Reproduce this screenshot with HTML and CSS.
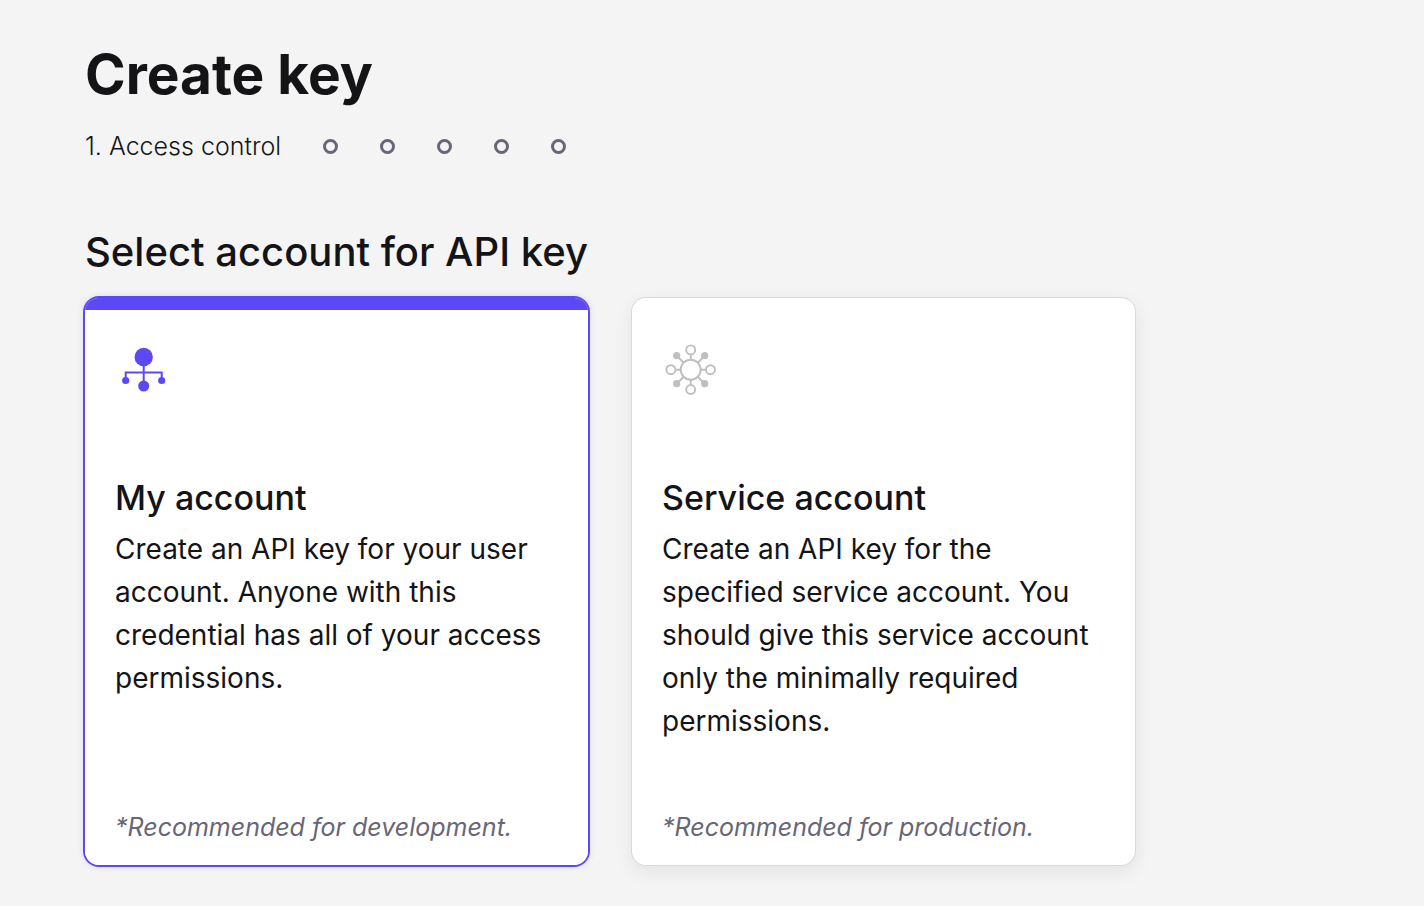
FILE: index.html
```html
<!DOCTYPE html>
<html lang="en">
<head>
<meta charset="utf-8">
<meta name="viewport" content="width=device-width, initial-scale=1">
<title>Create key</title>
<link rel="stylesheet" href="styles.css">
</head>
<body>
<main class="page">
  <h1 class="page-title">Create key</h1>
  <div class="stepper">
    <span class="step-label">1. Access control</span>
    <ol class="step-dots" aria-label="Remaining steps">
      <li class="dot"></li><li class="dot"></li><li class="dot"></li><li class="dot"></li><li class="dot"></li>
    </ol>
  </div>
  <h2 class="section-title" id="account-heading">Select account for API key</h2>
  <div class="cards" role="radiogroup" aria-labelledby="account-heading">
    <label class="card">
      <input class="card-input" type="radio" name="account" value="user" checked>
      <svg class="card-icon" viewBox="0 0 56 56" aria-hidden="true">
        <g fill="currentColor"><circle cx="28.700" cy="16" r="9.200"/><circle cx="28.700" cy="45" r="5.500"/><circle cx="10.700" cy="39.500" r="3.600"/><circle cx="46.700" cy="39.500" r="3.600"/></g>
        <path d="M28.700 16v28M10.700 39v-7.500h36V39" fill="none" stroke="currentColor" stroke-width="2"/>
      </svg>
      <span class="card-title">My account</span>
      <span class="card-text">Create an API key for your user account. Anyone with this credential has all of your access permissions.</span>
      <em class="card-note">*Recommended for development.</em>
    </label>
    <label class="card">
      <input class="card-input" type="radio" name="account" value="service">
      <svg class="card-icon" viewBox="0 0 56 56" aria-hidden="true">
        <g fill="none" stroke="currentColor" stroke-width="1.900"><circle cx="28.700" cy="28.700" r="10"/><circle cx="28.700" cy="8.900" r="4.500"/><circle cx="28.700" cy="48.500" r="4.500"/><circle cx="8.900" cy="28.700" r="4.500"/><circle cx="48.500" cy="28.700" r="4.500"/><path d="M28.700 13.500v5M28.700 39v5M13.500 28.700h5M39 28.700h5M15 15l6.500 6.500M42.500 15l-6.500 6.500M15 42.500l6.500-6.500M42.500 42.500l-6.500-6.500"/></g>
        <g fill="currentColor"><circle cx="14.700" cy="14.700" r="3.600"/><circle cx="42.700" cy="14.700" r="3.600"/><circle cx="14.700" cy="42.700" r="3.600"/><circle cx="42.700" cy="42.700" r="3.600"/></g>
      </svg>
      <span class="card-title">Service account</span>
      <span class="card-text">Create an API key for the specified service account. You should give this service account only the minimally required permissions.</span>
      <em class="card-note">*Recommended for production.</em>
    </label>
  </div>
</main>
</body>
</html>
```
FILE: styles.css
```css
* { box-sizing: border-box; }
body { margin: 0; background: #f4f4f4; color: #141416; font-family: Inter, "Liberation Sans", sans-serif; }
.page { padding: 40px 85px; }
.page-title { margin: 0; font-size: 55px; line-height: 68px; font-weight: 700; }
.stepper { display: flex; align-items: center; gap: 42px; margin-top: 20px; }
.step-label { font-size: 25px; line-height: 36px; font-weight: 300; }
.step-dots { display: flex; gap: 42px; margin: 0; padding: 0; list-style: none; }
.dot { width: 15px; height: 15px; border: 3px solid #686677; border-radius: 50%; }
.section-title { margin: 62px 0 20px; font-size: 40px; line-height: 52px; font-weight: 500; }
.cards { display: grid; grid-template-columns: repeat(2, 1fr); gap: 44px; max-width: 1050px; }
.card { position: relative; display: flex; flex-direction: column; min-height: 567px; padding: 43px 30px 16px; background: #fff; border-radius: 14px; box-shadow: 0 0 0 1px #d9d9db, 0 6px 20px rgba(0, 0, 0, .08); cursor: pointer; }
.card:has(:checked) { background: linear-gradient(#5c48f5 12px, #fff 12px); box-shadow: 0 0 0 2px #5c48f5, 0 0 6px 2px rgba(92, 72, 245, .15); }
.card:has(:focus-visible) { outline: 2px solid #5c48f5; outline-offset: 4px; }
.card-input { position: absolute; opacity: 0; }
.card-icon { width: 56px; height: 56px; color: #bfbfbf; }
.card:has(:checked) .card-icon { color: #5c48f5; }
.card-title { margin-top: 79px; font-size: 34px; line-height: 44px; font-weight: 500; }
.card-text { margin-top: 8px; font-size: 28px; line-height: 43px; }
.card-note { margin-top: auto; color: #686677; font-size: 25px; line-height: 44px; }
```
